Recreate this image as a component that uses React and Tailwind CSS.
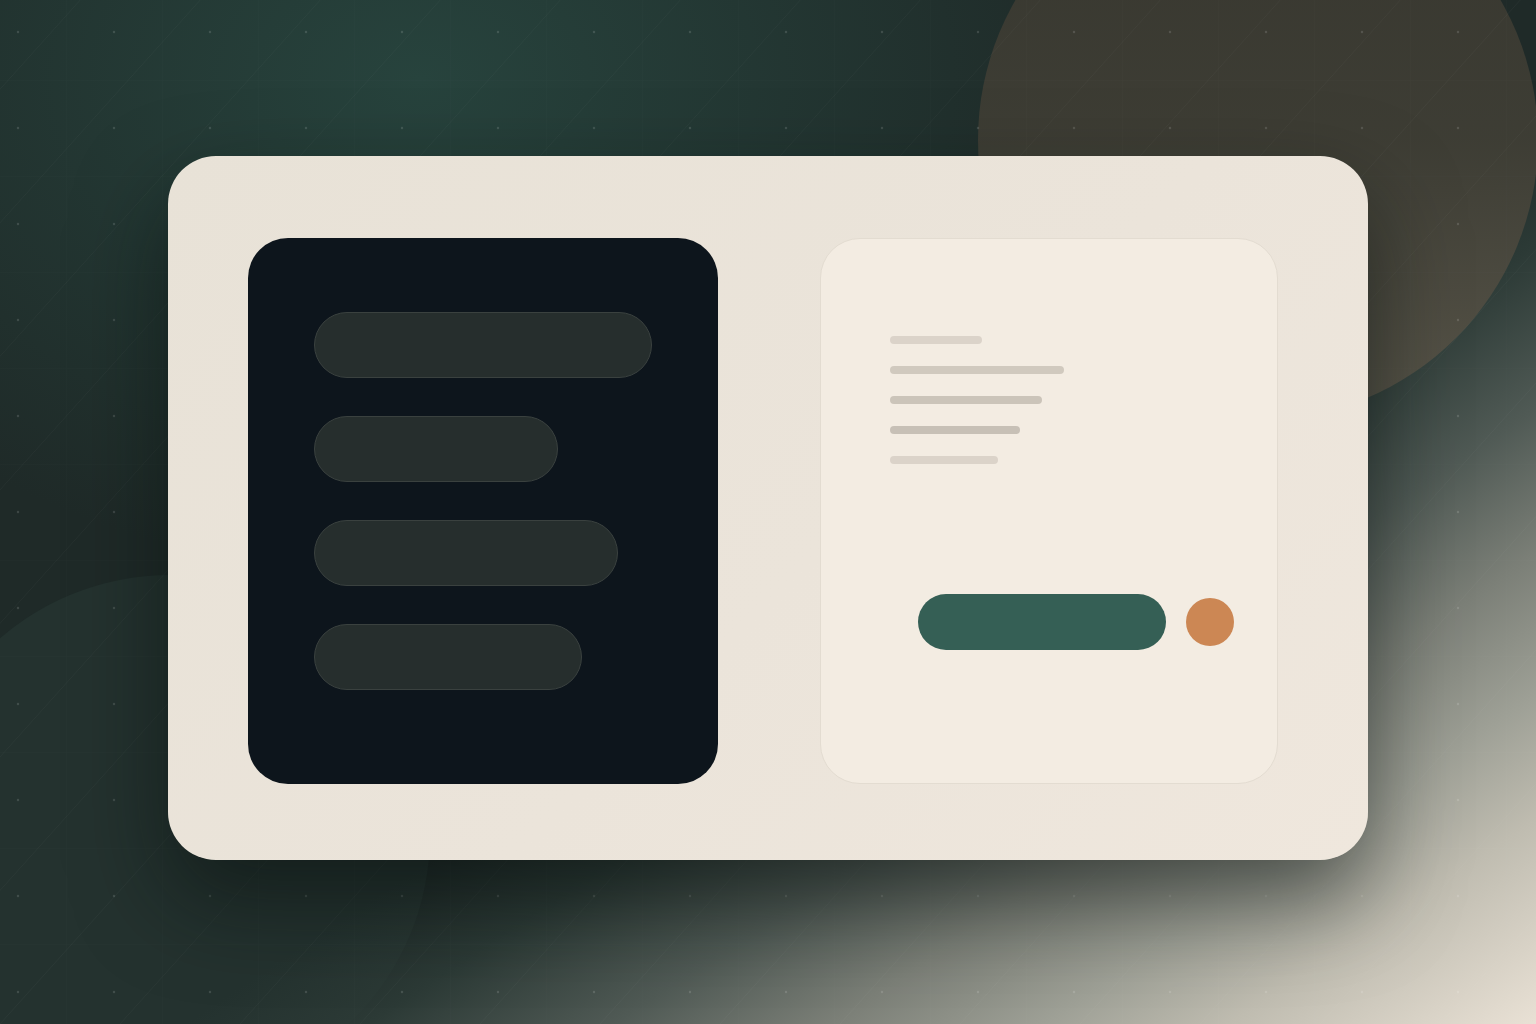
import React from "react";

function Texture() {
  const diag = [];
  for (let i = -12; i < 30; i++) {
    const x0 = i * 120;
    diag.push(
      <line key={i} x1={x0} y1={1024} x2={x0 + 1100} y2={-200} stroke="rgba(255,255,255,0.03)" strokeWidth="1" />
    );
  }
  return (
    <svg className="absolute inset-0 w-full h-full" width="1536" height="1024" viewBox="0 0 1536 1024">
      <defs>
        <pattern id="dots" x="-30" y="-16" width="96" height="96" patternUnits="userSpaceOnUse">
          <circle cx="48" cy="48" r="1.2" fill="rgba(255,255,255,0.13)" />
          <line x1="0" y1="0" x2="96" y2="0" stroke="rgba(255,255,255,0.015)" strokeWidth="1" />
          <line x1="0" y1="0" x2="0" y2="96" stroke="rgba(255,255,255,0.015)" strokeWidth="1" />
        </pattern>
      </defs>
      <rect width="1536" height="1024" fill="url(#dots)" />
      {diag}
    </svg>
  );
}

export default function App() {
  return (
    <div className="relative w-[1536px] h-[1024px] overflow-hidden bg-[#1f2a28]">
      {/* background glows */}
      <div className="absolute inset-0 bg-[radial-gradient(ellipse_700px_500px_at_420px_80px,#27433d_0%,rgba(39,67,61,0)_100%)]" />
      <div className="absolute left-[-90px] top-[575px] w-[520px] h-[520px] rounded-full bg-[#24322f]" />
      <div className="absolute inset-0 bg-[linear-gradient(to_bottom_right,rgba(31,42,40,0)_0%,rgba(31,42,40,0)_56%,#2c3a36_62%,#505a55_70%,#7b7f77_77%,#9ea096_84%,#bfbcb0_90%,#e9e1d5_100%)]" />
      <div className="absolute left-[978px] top-[-140px] w-[560px] h-[560px] rounded-full bg-[linear-gradient(180deg,#38372f_0%,#3f3e35_50%,#5a564a_100%)] opacity-95" />
      <Texture />

      {/* main card */}
      <div className="relative flex h-full items-center justify-center">
        <div className="mt-[-8px] w-[1200px] h-[704px] rounded-[48px] bg-[linear-gradient(135deg,#e8e2d7_0%,#ebe4da_55%,#efe7dd_100%)] shadow-[0_40px_90px_rgba(8,14,13,0.55)] pl-[80px] pt-[82px] flex">
          {/* dark panel */}
          <div className="w-[470px] h-[546px] rounded-[40px] bg-[#0d151c] pl-[66px] pt-[74px] flex flex-col gap-[38px]">
            <div className="w-[338px] h-[66px] rounded-full bg-[#262e2d] border border-[#3a413f]" />
            <div className="w-[244px] h-[66px] rounded-full bg-[#262e2d] border border-[#3a413f]" />
            <div className="w-[304px] h-[66px] rounded-full bg-[#262e2d] border border-[#3a413f]" />
            <div className="w-[268px] h-[66px] rounded-full bg-[#262e2d] border border-[#3a413f]" />
          </div>

          {/* light panel */}
          <div className="ml-[102px] w-[458px] h-[546px] rounded-[40px] bg-[#f3ece2] border border-[#e3dcd1] flex flex-col">
            <div className="pl-[69px] pt-[97px] flex flex-col gap-[22px]">
              <div className="w-[92px] h-[8px] rounded-full bg-[#dbd3c9]" />
              <div className="w-[174px] h-[8px] rounded-full bg-[#d0c9be]" />
              <div className="w-[152px] h-[8px] rounded-full bg-[#cbc4b9]" />
              <div className="w-[130px] h-[8px] rounded-full bg-[#c7c0b6]" />
              <div className="w-[108px] h-[8px] rounded-full bg-[#dbd3c9]" />
            </div>
            <div className="pl-[97px] mt-[130px] flex items-center gap-[20px]">
              <div className="w-[248px] h-[56px] rounded-full bg-[#355f55]" />
              <div className="w-[48px] h-[48px] rounded-full bg-[#cc8754]" />
            </div>
          </div>
        </div>
      </div>
    </div>
  );
}
